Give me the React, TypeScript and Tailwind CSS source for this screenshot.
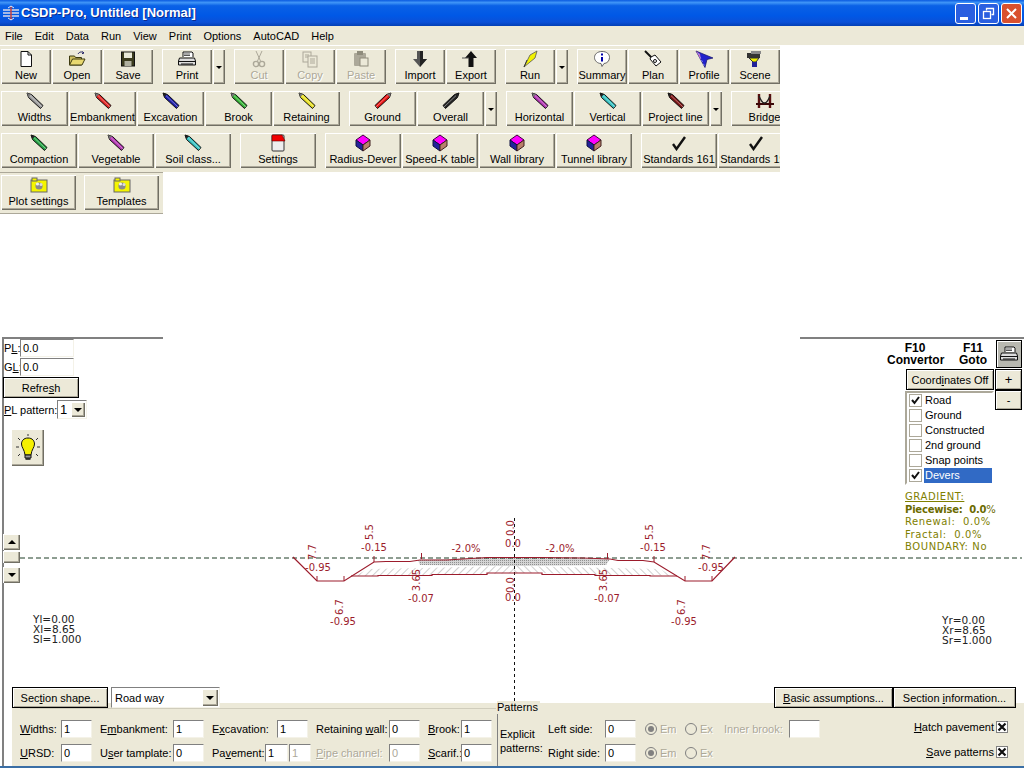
import type { ReactNode } from "react";

const RAISED =
  "bg-[#ece9d8] shadow-[inset_1px_1px_0_#fff,inset_-1px_-1px_0_#716f64,inset_-2px_-2px_0_#aca899]";
const DEFAULT_BTN =
  "bg-[#ece9d8] border border-black shadow-[inset_1px_1px_0_#fff,inset_-1px_-1px_0_#aca899]";
const SUNKEN = "border border-[#808080] border-r-[#f4f2e8] border-b-[#f4f2e8] bg-white";
const DEAD = "text-[#aca899] [text-shadow:1px_1px_0_#fff]";

function Pencil({ color, dark = false, flip = false }: { color: string; dark?: boolean; flip?: boolean }) {
  return (
    <svg width="20" height="18" viewBox="0 0 20 18" className={flip ? "-scale-x-100" : ""}>
      <polygon points="2,1 6.5,2.5 18,13.5 15.5,16.500 3.5,5.5" fill={color} stroke="#111" strokeWidth="1" />
      <polygon points="2,1 6,2.2 3.3,5" fill={dark ? "#222" : "#777"} />
      <line x1="5" y1="3.6" x2="17" y2="15" stroke="#fff" strokeOpacity="0.45" strokeWidth="1" />
    </svg>
  );
}

function Book() {
  return (
    <svg width="18" height="18" viewBox="0 0 18 18">
      <polygon points="2,6 9,1 16,6 9,11" fill="#f0f" stroke="#400040" />
      <polygon points="2,6 9,11 9,17 2,12" fill="#22229a" stroke="#101040" />
      <polygon points="16,6 9,11 9,17 16,12" fill="#b8806a" stroke="#402020" />
    </svg>
  );
}

function Check() {
  return (
    <svg width="18" height="16" viewBox="0 0 18 16">
      <path d="M3 9l3.5 5L15 2" fill="none" stroke="#111" strokeWidth="2.4" />
    </svg>
  );
}

function PlotFolder() {
  return (
    <svg width="18" height="16" viewBox="0 0 18 16">
      <rect x="1" y="3" width="16" height="12" fill="#f5f500" stroke="#666" />
      <rect x="2" y="1" width="5" height="3" fill="#f5f500" stroke="#666" />
      <circle cx="9" cy="9" r="3.6" fill="#8a8a8a" />
      <circle cx="7.5" cy="7" r="1.6" fill="#eee" />
      <circle cx="11" cy="7.5" r="1.5" fill="#ddd" />
    </svg>
  );
}

const ICONS: Record<string, ReactNode> = {
  new: (
    <svg width="16" height="18" viewBox="0 0 16 18">
      <path d="M3 1.5h7l3.5 3.5v11.5H3z" fill="#fff" stroke="#111" />
      <path d="M10 1.5V5h3.5" fill="none" stroke="#111" />
    </svg>
  ),
  open: (
    <svg width="18" height="18" viewBox="0 0 18 18">
      <path d="M1.5 15V6h5l1 1.5h6V15z" fill="#cfc060" stroke="#3d3a10" />
      <path d="M1.5 15l3-6h12.500l-3 6z" fill="#e8d870" stroke="#3d3a10" />
      <path d="M10 4c1.500-2.500 4-2.500 6-1M16 3l-1.500-1.500M16 3l-2 .7" fill="none" stroke="#226" />
    </svg>
  ),
  save: (
    <svg width="16" height="18" viewBox="0 0 16 18">
      <rect x="1.500" y="2" width="13" height="14" fill="#3b3b1e" stroke="#111" />
      <rect x="4" y="2.500" width="8" height="5.500" fill="#e8e8d8" />
      <rect x="4.500" y="11" width="7" height="5" fill="#b0b0a0" />
    </svg>
  ),
  print: (
    <svg width="20" height="18" viewBox="0 0 20 18">
      <path d="M6 7V2h9l1 1v4" fill="#fff" stroke="#111" />
      <path d="M2.500 8h15l1 3v4H1.500v-4z" fill="#ddd" stroke="#111" />
      <path d="M2 11.500h16M4 14h12" stroke="#111" />
      <path d="M7 4h6M7 5.500h6" stroke="#555" />
    </svg>
  ),
  cut: (
    <svg width="14" height="18" viewBox="0 0 14 18">
      <path d="M4 1l4.500 10M10 1L5.500 11" stroke="#aca899" fill="none" />
      <circle cx="4" cy="14" r="2.600" fill="none" stroke="#aca899" strokeWidth="1.400" />
      <circle cx="10" cy="14" r="2.600" fill="none" stroke="#aca899" strokeWidth="1.400" />
    </svg>
  ),
  copy: (
    <svg width="18" height="18" viewBox="0 0 18 18">
      <rect x="2" y="2" width="8" height="10" fill="#ece9d8" stroke="#aca899" />
      <rect x="7" y="6" width="9" height="11" fill="#ece9d8" stroke="#aca899" />
      <path d="M9 9h5M9 11h5M9 13h5M4 5h4M4 7h3" stroke="#aca899" />
    </svg>
  ),
  paste: (
    <svg width="18" height="18" viewBox="0 0 18 18">
      <rect x="2" y="3" width="12" height="13" rx="1" fill="#aca899" />
      <rect x="5" y="1" width="6" height="4" fill="#8f8c7c" />
      <rect x="8" y="8" width="8" height="8" fill="#ece9d8" stroke="#8f8c7c" />
    </svg>
  ),
  import: (
    <svg width="18" height="18" viewBox="0 0 18 18">
      <path d="M6 1h6v8h4l-7 8-7-8h4z" fill="#555" />
      <path d="M9 1h3v8h4l-7 8z" fill="#222" />
    </svg>
  ),
  export: (
    <svg width="18" height="18" viewBox="0 0 18 18">
      <path d="M9 1l6 7h-3.500v9h-5V8H3z" fill="#111" />
      <path d="M0 8h7" stroke="#555" />
    </svg>
  ),
  run: (
    <svg width="18" height="18" viewBox="0 0 18 18">
      <path d="M16 1L9 5 3 17l3-2.500L14 8z" fill="#f2f200" stroke="#555" strokeWidth="0.800" />
      <path d="M3 17l3-7" stroke="#333" />
    </svg>
  ),
  summary: (
    <svg width="20" height="18" viewBox="0 0 20 18">
      <path d="M10 1.500c5 0 7.500 2.700 7.500 6s-2.500 6-5.500 6l-2 3-1-3c-3.500 0-6.500-2.700-6.500-6s2.800-6 7.500-6z" fill="#fff" stroke="#666" />
      <rect x="9" y="3.500" width="2" height="2" fill="#00a" />
      <rect x="9" y="7" width="2" height="4.500" fill="#00a" />
    </svg>
  ),
  plan: (
    <svg width="18" height="18" viewBox="0 0 18 18">
      <path d="M1 1l7 7" stroke="#111" strokeWidth="2" />
      <path d="M7 7l4-2 6 7-5 4-6-7z" fill="#fff" stroke="#111" />
      <circle cx="11" cy="11" r="1.500" fill="none" stroke="#111" />
    </svg>
  ),
  profile: (
    <svg width="20" height="18" viewBox="0 0 20 18">
      <path d="M2 1l17 7-6 1.500-2 8z" fill="#2222cc" stroke="#116" strokeWidth="0.700" />
      <path d="M2 1l4 3 1 6z" fill="#d070c0" />
      <path d="M4 3l7 14" stroke="#88f" strokeDasharray="2 2" />
    </svg>
  ),
  scene: (
    <svg width="18" height="18" viewBox="0 0 18 18">
      <rect x="1" y="3" width="13" height="5" fill="#333" />
      <rect x="5" y="1" width="10" height="3" fill="#888" />
      <path d="M3 8l4 4h3l3-4z" fill="#f0f000" stroke="#333" />
      <rect x="6" y="12" width="5" height="5" fill="#22229a" />
    </svg>
  ),
  bridge: (
    <svg width="18" height="18" viewBox="0 0 18 18">
      <path d="M3 2v14M14 2v14" stroke="#5a1010" strokeWidth="2.400" />
      <path d="M0 11h18v2H0z" fill="#3a0808" />
      <path d="M3 4c2 5 4 7 5.500 7M14 4c-2 5-4 7-5.500 7" fill="none" stroke="#222" strokeWidth="1.400" />
    </svg>
  ),
  settings: (
    <svg width="18" height="18" viewBox="0 0 18 18">
      <rect x="3" y="1" width="12" height="16" rx="1" fill="#eee" stroke="#333" />
      <path d="M3 1h10l3 6H3z" fill="#f00000" stroke="#600" strokeWidth="0.600" />
    </svg>
  ),
  pGray: <Pencil color="#999" />,
  pRed: <Pencil color="#e02020" />,
  pBlue: <Pencil color="#1a1aa8" dark />,
  pGreen: <Pencil color="#30b030" />,
  pYellow: <Pencil color="#e8e020" />,
  pGround: <Pencil color="#e81010" flip />,
  pOverall: <Pencil color="#222" dark flip />,
  pPurple: <Pencil color="#b030b0" />,
  pCyan: <Pencil color="#30c0c0" dark />,
  pMaroon: <Pencil color="#7a1010" dark />,
  pDarkGreen: <Pencil color="#20a040" dark />,
  book: <Book />,
  check: <Check />,
  folder: <PlotFolder />,
};

type Tool = { label?: string; icon?: string; cls: string; off?: boolean };

const ROW1: Tool[] = [
  { label: "New", icon: "new", cls: "w-[50px]" },
  { label: "Open", icon: "open", cls: "w-[50px]" },
  { label: "Save", icon: "save", cls: "w-[50px]" },
  { label: "Print", icon: "print", cls: "w-[50px] ml-[8px]" },
  { cls: "w-[12px]" },
  { label: "Cut", icon: "cut", cls: "w-[50px] ml-[8px]", off: true },
  { label: "Copy", icon: "copy", cls: "w-[50px]", off: true },
  { label: "Paste", icon: "paste", cls: "w-[50px]", off: true },
  { label: "Import", icon: "import", cls: "w-[50px] ml-[8px]" },
  { label: "Export", icon: "export", cls: "w-[50px]" },
  { label: "Run", icon: "run", cls: "w-[50px] ml-[8px]" },
  { cls: "w-[12px]" },
  { label: "Summary", icon: "summary", cls: "w-[50px] ml-[8px]" },
  { label: "Plan", icon: "plan", cls: "w-[50px]" },
  { label: "Profile", icon: "profile", cls: "w-[50px]" },
  { label: "Scene", icon: "scene", cls: "w-[50px]" },
];

const ROW2: Tool[] = [
  { label: "Widths", icon: "pGray", cls: "w-[67px]" },
  { label: "Embankment", icon: "pRed", cls: "w-[67px]" },
  { label: "Excavation", icon: "pBlue", cls: "w-[67px]" },
  { label: "Brook", icon: "pGreen", cls: "w-[67px]" },
  { label: "Retaining", icon: "pYellow", cls: "w-[67px]" },
  { label: "Ground", icon: "pGround", cls: "w-[67px] ml-[8px]" },
  { label: "Overall", icon: "pOverall", cls: "w-[67px]" },
  { cls: "w-[12px]" },
  { label: "Horizontal", icon: "pPurple", cls: "w-[67px] ml-[8px]" },
  { label: "Vertical", icon: "pCyan", cls: "w-[67px]" },
  { label: "Project line", icon: "pMaroon", cls: "w-[67px]" },
  { cls: "w-[12px]" },
  { label: "Bridge", icon: "bridge", cls: "w-[67px] ml-[8px]" },
];

const ROW3: Tool[] = [
  { label: "Compaction", icon: "pDarkGreen", cls: "w-[76px]" },
  { label: "Vegetable", icon: "pPurple", cls: "w-[76px]" },
  { label: "Soil class...", icon: "pCyan", cls: "w-[76px]" },
  { label: "Settings", icon: "settings", cls: "w-[76px] ml-[8px]" },
  { label: "Radius-Dever", icon: "book", cls: "w-[76px] ml-[8px]" },
  { label: "Speed-K table", icon: "book", cls: "w-[76px]" },
  { label: "Wall library", icon: "book", cls: "w-[76px]" },
  { label: "Tunnel library", icon: "book", cls: "w-[76px]" },
  { label: "Standards 161", icon: "check", cls: "w-[76px] ml-[8px]" },
  { label: "Standards 191", icon: "check", cls: "w-[76px]" },
];

const ROW4: Tool[] = [
  { label: "Plot settings", icon: "folder", cls: "w-[75px]" },
  { label: "Templates", icon: "folder", cls: "w-[75px] ml-[7px]" },
];

function ToolButton({ tool }: { tool: Tool }) {
  return (
    <div className={`${RAISED} ${tool.cls} h-[35px] shrink-0 flex flex-col items-center justify-end pb-[2px]`}>
      {tool.icon ? (
        <>
          <div className="h-[18px] flex items-center justify-center">{ICONS[tool.icon]}</div>
          <div className={`leading-[14px] whitespace-nowrap ${tool.off ? DEAD : ""}`}>{tool.label}</div>
        </>
      ) : (
        <div className="mb-[13px] w-0 h-0 border-x-[3px] border-x-transparent border-t-[3px] border-t-black" />
      )}
    </div>
  );
}

function ToolRow({ tools, cls }: { tools: Tool[]; cls: string }) {
  return (
    <div className={`${cls} h-[42px] pl-[1px] flex gap-[1px] overflow-hidden bg-[#ece9d8]`}>
      {tools.map((t, i) => (
        <ToolButton key={i} tool={t} />
      ))}
    </div>
  );
}

function TitleBar() {
  return (
    <div className="h-[26px] flex items-center bg-[linear-gradient(180deg,#0a5ae0_0%,#3f95f7_10%,#0a61e6_22%,#0058e6_60%,#0a50d8_85%,#0340b5_100%)]">
      <svg width="18" height="16" viewBox="0 0 18 16" className="ml-[2px]">
        <path d="M1 5h16M1 8h16M1 11h16" stroke="#d8d8e8" strokeWidth="1.500" />
        <path d="M9 1v14" stroke="#c04040" strokeWidth="1.500" />
        <path d="M6 3l3-2 3 2M6 13l3 2 3-2" fill="none" stroke="#e8e8f8" />
      </svg>
      <div className="ml-[1px] text-[13px] font-bold text-white [text-shadow:1px_1px_0_#0a2a90]">
        CSDP-Pro, Untitled [Normal]
      </div>
      <div className="ml-auto mr-[2px] flex gap-[2px]">
        <div className="w-[21px] h-[21px] rounded-[3px] border border-white bg-[#2a5fe0] flex items-end pl-[4px] pb-[3px]">
          <div className="w-[8px] h-[3px] bg-white" />
        </div>
        <div className="w-[21px] h-[21px] rounded-[3px] border border-white bg-[#2a5fe0] flex items-center justify-center">
          <svg width="13" height="13" viewBox="0 0 13 13">
            <path d="M4.500 3.500V1.500h7v6h-2" fill="none" stroke="#fff" strokeWidth="1.300" />
            <rect x="1.500" y="4.500" width="7" height="7" fill="none" stroke="#fff" strokeWidth="1.300" />
          </svg>
        </div>
        <div className="w-[21px] h-[21px] rounded-[3px] border border-white bg-[#d9502e] flex items-center justify-center">
          <svg width="13" height="13" viewBox="0 0 13 13">
            <path d="M2 2l9 9M11 2l-9 9" stroke="#fff" strokeWidth="2" />
          </svg>
        </div>
      </div>
    </div>
  );
}

const MENU = ["File", "Edit", "Data", "Run", "View", "Print", "Options", "AutoCAD", "Help"];

function MenuBar() {
  return (
    <div className="h-[19px] bg-[#ece9d8] flex items-center pl-[5px] gap-[12px]">
      {MENU.map((m) => (
        <span key={m}>{m}</span>
      ))}
    </div>
  );
}

const RED = "#9c1c2c";

function Lbl({ x, y, t, rot }: { x: number; y: number; t: string; rot?: boolean }) {
  return (
    <text
      x={x}
      y={y}
      fill={RED}
      fontSize="10"
      textAnchor="middle"
      transform={rot ? `rotate(-90 ${x} ${y})` : undefined}
      className="font-['DejaVu_Sans',sans-serif]"
    >
      {t}
    </text>
  );
}

function SectionDrawing() {
  return (
    <svg width="1024" height="367" viewBox="0 337 1024 367" className="absolute -left-[4px] top-0">
      <defs>
        <pattern id="hatchL" width="5" height="5" patternUnits="userSpaceOnUse" patternTransform="rotate(45)">
          <line x1="0" y1="0" x2="0" y2="5" stroke="#a0a0a0" strokeWidth="1" />
        </pattern>
        <pattern id="hatchR" width="5" height="5" patternUnits="userSpaceOnUse" patternTransform="rotate(-45)">
          <line x1="0" y1="0" x2="0" y2="5" stroke="#a0a0a0" strokeWidth="1" />
        </pattern>
        <pattern id="dense" width="2" height="2" patternUnits="userSpaceOnUse">
          <rect width="2" height="2" fill="#d4d4d4" />
          <rect width="1" height="1" fill="#909090" />
        </pattern>
      </defs>

      <polygon points="355,576 368,569 420,568 514,566 514,573 487,574 432,575 378,576" fill="url(#hatchL)" />
      <polygon points="514,566 610,568 660,569 672,576 650,575 595,575 542,573 514,573" fill="url(#hatchR)" />
      <polygon points="418,560 514,557 610,559 606,565 514,566 420,565" fill="url(#dense)" />

      <line x1="20" y1="558" x2="1022" y2="558" stroke="#1c3c24" strokeDasharray="5 3" />
      <line x1="514.500" y1="518" x2="514.500" y2="704" stroke="#111" strokeDasharray="3 3" />

      <g fill="none" stroke={RED} strokeWidth="1">
        <path d="M293 557L317 581H344L374 562L386 561.500H410L420 560H447L487 557.500H542L583 558L610 559L618 560.500H643L654 562L685 581H712L735 557" strokeWidth="1.200" />
        <path d="M351 576H378V575.500H432V574.500H487V573H542V574.500H595V575.500H650V576H677" strokeWidth="1.200" />
        <path d="M317 576V581M344 576V581M685 576V581M712 576V581M374 556V562M654 556V562M421.500 553V559M607.500 553V559" />
      </g>

      <Lbl x={316} y={552} t="7.7" rot />
      <Lbl x={318} y={571} t="-0.95" />
      <Lbl x={373} y={532} t="5.5" rot />
      <Lbl x={374} y={551} t="-0.15" />
      <Lbl x={466} y={552} t="-2.0%" />
      <Lbl x={514} y={528} t="0.0" rot />
      <Lbl x={513} y={547} t="0.0" />
      <Lbl x={420} y={580} t="3.65" rot />
      <Lbl x={421} y={602} t="-0.07" />
      <Lbl x={343} y={607} t="6.7" rot />
      <Lbl x={343} y={625} t="-0.95" />
      <Lbl x={514} y={585} t="0.0" rot />
      <Lbl x={513} y={601} t="0.0" />
      <Lbl x={653} y={532} t="5.5" rot />
      <Lbl x={653} y={551} t="-0.15" />
      <Lbl x={560} y={552} t="-2.0%" />
      <Lbl x={710} y={552} t="7.7" rot />
      <Lbl x={711} y={571} t="-0.95" />
      <Lbl x={607} y={580} t="3.65" rot />
      <Lbl x={607} y={602} t="-0.07" />
      <Lbl x={685} y={607} t="6.7" rot />
      <Lbl x={684} y={625} t="-0.95" />
    </svg>
  );
}

function Arrow({ cls = "border-t-black border-t-[4px]" }: { cls?: string }) {
  return <div className={`w-0 h-0 border-x-[4px] border-x-transparent ${cls}`} />;
}

function LeftControls() {
  return (
    <div className="w-[100px] pt-[2px] flex flex-col relative">
      <div className="flex items-center h-[18px]">
        <span className="w-[16px]">
          P<u>L</u>:
        </span>
        <div className={`${SUNKEN} w-[54px] h-[18px] pl-[2px] leading-[16px]`}>0.0</div>
      </div>
      <div className="flex items-center h-[18px] mt-[1px]">
        <span className="w-[16px]">
          G<u>L</u>:
        </span>
        <div className={`${SUNKEN} w-[54px] h-[18px] pl-[2px] leading-[16px]`}>0.0</div>
      </div>
      <div className={`${DEFAULT_BTN} w-[76px] h-[21px] -ml-[1px] mt-[1px] flex items-center justify-center`}>
        <span>
          Refre<u>s</u>h
        </span>
      </div>
      <div className="flex items-center mt-[2px] h-[19px]">
        <span className="whitespace-nowrap w-[53px]">
          <u>P</u>L pattern:
        </span>
        <div className={`${SUNKEN} w-[30px] h-[19px] flex items-center justify-between pl-[2px] pr-[1px]`}>
          <span className="text-[13px] leading-none">1</span>
          <div className={`${RAISED} w-[14px] h-[15px] flex items-center justify-center`}>
            <Arrow />
          </div>
        </div>
      </div>
      <div className={`${RAISED} w-[33px] h-[37px] mt-[10px] ml-[7px] flex items-center justify-center`}>
        <svg width="26" height="30" viewBox="0 0 26 30">
          <path d="M13 5c4.500 0 6.500 3 6.500 6 0 3.500-3 5.500-3.500 11h-6c-.5-5.500-3.500-7.500-3.500-11 0-3 2-6 6.500-6z" fill="#f5f000" stroke="#111" />
          <path d="M10 22h6v3h-6z" fill="#999" stroke="#111" />
          <path d="M10.500 26h5" stroke="#111" strokeWidth="1.500" />
          <path d="M13 1v2M3 5l2 2M23 5l-2 2M1 14h3M25 14h-3M3 23l2-2M23 23l-2-2" stroke="#333" />
        </svg>
      </div>
      <div className="mt-[68px] w-[17px] -ml-[1px] flex flex-col">
        <div className={`${RAISED} h-[16px] flex items-center justify-center`}>
          <Arrow cls="border-b-black border-b-[4px]" />
        </div>
        <div className={`${RAISED} h-[12px] mt-[1px]`} />
        <div className="h-[4px]" />
        <div className={`${RAISED} h-[16px] flex items-center justify-center`}>
          <Arrow />
        </div>
      </div>
      <div className="mt-[31px] ml-[29px] text-[10.500px] leading-[10px] text-[#222] font-['DejaVu_Sans',sans-serif]">
        <div>Yl=0.00</div>
        <div>Xl=8.65</div>
        <div>Sl=1.000</div>
      </div>
    </div>
  );
}

const LAYERS = [
  { name: "Road", on: true },
  { name: "Ground", on: false },
  { name: "Constructed", on: false },
  { name: "2nd ground", on: false },
  { name: "Snap points", on: false },
  { name: "Devers", on: true, sel: true },
];

function RightControls() {
  return (
    <div className="w-[135px] pt-[3px] flex flex-col relative">
      <div className="flex">
        <div className="w-[56px] pt-[2px] font-bold text-[12px] leading-[12px] text-center whitespace-nowrap">
          <div>F10</div>
          <div>Convertor</div>
        </div>
        <div className="w-[28px] ml-[16px] pt-[2px] font-bold text-[12px] leading-[12px] text-center">
          <div>F11</div>
          <div>Goto</div>
        </div>
        <div className="ml-[9px] w-[26px] h-[28px] bg-[#b8b8b0] border border-black shadow-[inset_1px_1px_0_#fff] flex items-center justify-center">
          {ICONS.print}
        </div>
      </div>
      <div className="flex mt-[1px] ml-[19px]">
        <div className={`${DEFAULT_BTN} w-[88px] h-[21px] flex items-center justify-center whitespace-nowrap`}>
          <span>
            Coord<u>i</u>nates Off
          </span>
        </div>
        <div className={`${DEFAULT_BTN} ml-[1px] w-[27px] h-[21px] flex items-center justify-center text-[13px]`}>+</div>
      </div>
      <div className="flex ml-[18px]">
        <div className={`${SUNKEN} border-2 border-[#aca899] border-r-white border-b-white w-[89px] h-[94px] mt-[1px] pl-[1px]`}>
          {LAYERS.map((l) => (
            <div key={l.name} className="h-[15px] flex items-center">
              <div className="w-[13px] h-[13px] border border-[#aca899] bg-white flex items-center justify-center ml-[1px]">
                {l.on && (
                  <svg width="11" height="11" viewBox="0 0 11 11">
                    <path d="M2 5l2.500 3L9 2" fill="none" stroke="#111" strokeWidth="2" />
                  </svg>
                )}
              </div>
              <div className={`ml-[2px] pl-[1px] flex-1 h-[15px] leading-[15px] ${l.sel ? "bg-[#316ac5] text-white" : ""}`}>
                {l.name}
              </div>
            </div>
          ))}
        </div>
        <div className={`${DEFAULT_BTN} ml-[1px] w-[27px] h-[20px] flex items-center justify-center`}>-</div>
      </div>
      <div className="mt-[6px] ml-[18px] text-[10px] leading-[12.500px] text-[#808000] tracking-[0.6px] font-['DejaVu_Sans',sans-serif] whitespace-nowrap">
        <div className="underline">GRADIENT:</div>
        <div className="font-bold text-[#6b6b00] tracking-[-0.2px]">
          Piecewise: &nbsp;0.0<span className="font-normal">%</span>
        </div>
        <div>Renewal: &nbsp;0.0%</div>
        <div>Fractal: &nbsp;0.0%</div>
        <div>BOUNDARY: No</div>
      </div>
      <div className="mt-[61px] ml-[55px] text-[10.500px] leading-[10px] text-[#222] font-['DejaVu_Sans',sans-serif]">
        <div>Yr=0.00</div>
        <div>Xr=8.65</div>
        <div>Sr=1.000</div>
      </div>
    </div>
  );
}

function Field({ value, cls = "w-[31px]", off = false }: { value: string; cls?: string; off?: boolean }) {
  return (
    <div className={`${SUNKEN} ${cls} h-[18px] pl-[2px] leading-[16px] ${off ? "text-[#aca899]" : ""}`}>{value}</div>
  );
}

function Radio({ label, on = false }: { label: string; on?: boolean }) {
  return (
    <div className="flex items-center gap-[3px] text-[#aca899]">
      <div className="w-[12px] h-[12px] rounded-full border border-[#808080] bg-[#ece9d8] flex items-center justify-center">
        {on && <div className="w-[6px] h-[6px] rounded-full bg-[#808080]" />}
      </div>
      <span className={DEAD}>{label}</span>
    </div>
  );
}

function XBox() {
  return (
    <div className="w-[12px] h-[12px] border border-[#808080] bg-white flex items-center justify-center">
      <svg width="10" height="10" viewBox="0 0 10 10">
        <path d="M1.500 1.500l7 7M8.500 1.500l-7 7" stroke="#111" strokeWidth="2.200" />
      </svg>
    </div>
  );
}

function BottomPanel() {
  return (
    <div className="h-[63px] ml-[8px] bg-[#ece9d8] flex pt-[6px] pl-[8px]">
      <div className="w-[476px] border-t border-[#d0cdbc] -mt-[1px] flex flex-col pt-[11px] gap-[6px]">
        <div className="flex items-center h-[18px]">
          <span className="w-[41px]">
            <u>W</u>idths:
          </span>
          <Field value="1" />
          <span className="w-[73px] ml-[8px]">
            E<u>m</u>bankment:
          </span>
          <Field value="1" />
          <span className="w-[65px] ml-[8px]">
            E<u>x</u>cavation:
          </span>
          <Field value="1" />
          <span className="w-[73px] ml-[8px] whitespace-nowrap">
            Retaining <u>w</u>all:
          </span>
          <Field value="0" />
          <span className="w-[33px] ml-[8px]">
            <u>B</u>rook:
          </span>
          <Field value="1" />
        </div>
        <div className="flex items-center h-[18px]">
          <span className="w-[41px]">
            <u>U</u>RSD:
          </span>
          <Field value="0" />
          <span className="w-[73px] ml-[8px] whitespace-nowrap">
            U<u>s</u>er tamplate:
          </span>
          <Field value="0" />
          <span className="w-[53px] ml-[8px]">
            Pa<u>v</u>ement:
          </span>
          <Field value="1" cls="w-[23px]" />
          <Field value="1" cls="w-[22px] ml-[1px]" off />
          <span className={`w-[73px] ml-[5px] whitespace-nowrap ${DEAD}`}>
            <u>P</u>ipe channel:
          </span>
          <Field value="0" off />
          <span className="w-[33px] ml-[8px]">
            <u>S</u>carif.:
          </span>
          <Field value="0" />
        </div>
      </div>

      <div className="relative ml-[1px] flex-1 border-l border-[#808080] -mt-[1px] flex">
        <span className="absolute -top-[7px] -left-[1px] bg-[#ece9d8] pr-[2px] leading-[13px]">Patterns</span>
        <div className="w-[50px] pl-[2px] pt-[19px] leading-[14px]">
          Explicit
          <br />
          patterns:
        </div>
        <div className="flex flex-col pt-[12px] gap-[6px]">
          <div className="flex items-center h-[18px]">
            <span className="w-[57px]">Left side:</span>
            <Field value="0" />
            <div className="ml-[9px] w-[40px]">
              <Radio label="Em" on />
            </div>
            <div className="w-[39px]">
              <Radio label="Ex" />
            </div>
            <span className={`w-[65px] whitespace-nowrap ${DEAD}`}>Inner brook:</span>
            <Field value="" />
          </div>
          <div className="flex items-center h-[18px]">
            <span className="w-[57px]">Right side:</span>
            <Field value="0" />
            <div className="ml-[9px] w-[40px]">
              <Radio label="Em" on />
            </div>
            <div className="w-[39px]">
              <Radio label="Ex" />
            </div>
          </div>
        </div>
        <div className="ml-auto mr-[16px] flex flex-col items-end pt-[12px] gap-[12px]">
          <div className="flex items-center gap-[2px] h-[13px]">
            <span>
              <u>H</u>atch pavement
            </span>
            <XBox />
          </div>
          <div className="flex items-center gap-[2px] h-[13px]">
            <span>
              <u>S</u>ave patterns
            </span>
            <XBox />
          </div>
        </div>
      </div>
    </div>
  );
}

function ActionRow() {
  return (
    <div className="relative z-10 h-[21px] -mb-[5px] flex pl-[8px] pr-[8px]">
      <div className={`${DEFAULT_BTN} w-[96px] h-[21px] flex items-center justify-center`}>
        <span>
          Sec<u>t</u>ion shape...
        </span>
      </div>
      <div className={`${SUNKEN} ml-[3px] w-[109px] h-[21px] flex items-center pl-[3px] pr-[1px]`}>
        <span className="flex-1">Road way</span>
        <div className={`${RAISED} w-[16px] h-[17px] flex items-center justify-center`}>
          <Arrow />
        </div>
      </div>
      <div className={`${DEFAULT_BTN} ml-auto w-[119px] h-[21px] flex items-center justify-center`}>
        <span>
          <u>B</u>asic assumptions...
        </span>
      </div>
      <div className={`${DEFAULT_BTN} w-[123px] h-[21px] flex items-center justify-center`}>
        <span>
          Section <u>i</u>nformation...
        </span>
      </div>
    </div>
  );
}

export default function App() {
  return (
    <div className="w-[1024px] h-[768px] overflow-hidden bg-white text-[11px] leading-[14px] text-black flex flex-col font-['Liberation_Sans',sans-serif]">
      <TitleBar />
      <MenuBar />
      <div className="h-[1px]" />
      <ToolRow tools={ROW1} cls="w-[780px] pt-[3px]" />
      <ToolRow tools={ROW2} cls="w-[780px] pt-[3px]" />
      <ToolRow tools={ROW3} cls="w-[780px] pt-[3px]" />
      <ToolRow tools={ROW4} cls="w-[163px] pt-[2px] border-y border-[#aca899]" />
      <div className="h-[123px]" />
      <div className="relative flex-1 flex flex-col border-l-2 border-[#808080] ml-[2px]">
        <div className="absolute top-0 -left-[2px] right-0 flex justify-between">
          <div className="w-[161px] h-[2px] bg-[#808080]" />
          <div className="w-[224px] h-[2px] bg-[#808080]" />
        </div>
        <SectionDrawing />
        <div className="relative flex-1 flex justify-between pr-[2px]">
          <LeftControls />
          <RightControls />
        </div>
        <ActionRow />
        <BottomPanel />
      </div>
      <div className="h-[2px] bg-[#3a6ea5]" />
    </div>
  );
}
